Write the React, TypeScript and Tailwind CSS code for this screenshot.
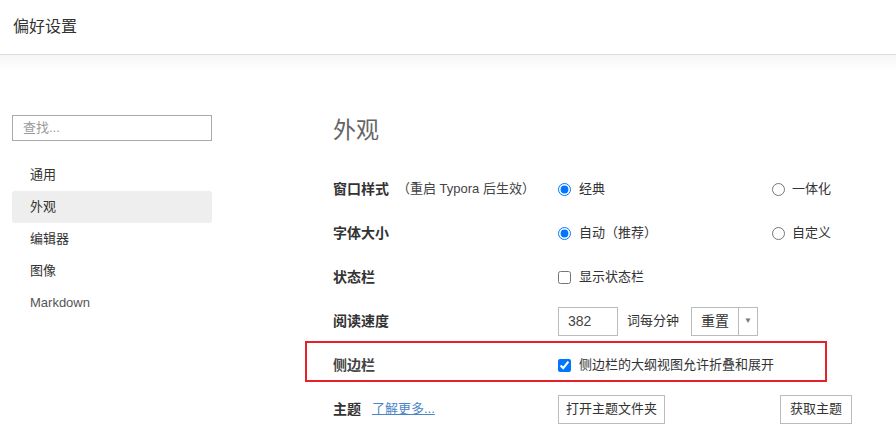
import React from "react";

const font = { fontFamily: '"Liberation Sans", "Noto Sans CJK SC", sans-serif' };

function Radio({ checked }: { checked?: boolean }) {
  return (
    <input
      type="radio"
      checked={!!checked}
      readOnly
      className="m-0 h-[13px] w-[13px] accent-[#0075ff]"
    />
  );
}

function Row({ children, className = "" }: { children: React.ReactNode; className?: string }) {
  return <div className={"relative flex h-[44px] items-center " + className}>{children}</div>;
}

export default function App() {
  return (
    <div className="min-h-[432px] w-[896px] overflow-hidden bg-white text-[#333]" style={font}>
      <div className="flex h-[55px] items-center border-b border-[#dcdcdc] bg-white pl-[13px]">
        <span className="text-[16px] text-[#333]">偏好设置</span>
      </div>
      <div className="h-[16px] bg-gradient-to-b from-[#f6f6f6] to-white" />
      <div className="flex">
        <div className="ml-[12px] mt-[44px] w-[200px]">
          <div className="flex h-[26px] items-center border border-[#a9a9a9] pl-[10px] text-[13px] text-[#999]">
            查找...
          </div>
          <div className="mt-[18px] flex flex-col text-[13px]">
            <div className="flex h-[32px] items-center pl-[18px] text-[#333]">通用</div>
            <div className="flex h-[32px] items-center rounded-[3px] bg-[#eeeeee] pl-[18px] text-[#333]">外观</div>
            <div className="flex h-[32px] items-center pl-[18px] text-[#333]">编辑器</div>
            <div className="flex h-[32px] items-center pl-[18px] text-[#333]">图像</div>
            <div className="flex h-[32px] items-center pl-[18px] text-[#555]">Markdown</div>
          </div>
        </div>
        <div className="ml-[121px] flex-1">
          <div className="mt-[44px] h-[52px] text-[23px] leading-[30px] text-[#666]">外观</div>
          <div className="flex flex-col text-[13px]">
            <Row>
              <div className="flex w-[225px] items-center">
                <span className="text-[14px] font-bold text-[#333]">窗口样式</span>
                <span className="ml-[8px] text-[13px] text-[#444]">（重启 Typora 后生效）</span>
              </div>
              <div className="flex w-[214px] items-center gap-[8px]">
                <Radio checked />
                <span>经典</span>
              </div>
              <div className="flex items-center gap-[7px]">
                <Radio />
                <span>一体化</span>
              </div>
            </Row>
            <Row>
              <div className="w-[225px] text-[14px] font-bold">字体大小</div>
              <div className="flex w-[214px] items-center gap-[8px]">
                <Radio checked />
                <span>自动（推荐）</span>
              </div>
              <div className="flex items-center gap-[7px]">
                <Radio />
                <span>自定义</span>
              </div>
            </Row>
            <Row>
              <div className="w-[225px] text-[14px] font-bold">状态栏</div>
              <div className="flex items-center gap-[8px]">
                <input type="checkbox" readOnly checked={false} className="m-0 h-[13px] w-[13px]" />
                <span>显示状态栏</span>
              </div>
            </Row>
            <Row>
              <div className="w-[225px] text-[14px] font-bold">阅读速度</div>
              <div className="flex h-[29px] w-[60px] items-center border border-[#bbb] pl-[9px] text-[14px] text-[#444]">382</div>
              <span className="ml-[9px]">词每分钟</span>
              <div className="ml-[12px] flex h-[29px] items-stretch border border-[#bbb]">
                <div className="flex w-[47px] items-center justify-center border-r border-[#bbb] text-[14px]">重置</div>
                <div className="flex w-[18px] items-center justify-center text-[8px] text-[#777]">▼</div>
              </div>
            </Row>
            <Row>
              <div className="pointer-events-none absolute left-[-28px] top-[-2px] h-[41px] w-[522px] border-2 border-[#e8202a]" />
              <div className="w-[225px] text-[14px] font-bold text-[#444]">侧边栏</div>
              <div className="flex items-center gap-[8px]">
                <input type="checkbox" readOnly checked className="m-0 h-[13px] w-[13px] accent-[#0075ff]" />
                <span>侧边栏的大纲视图允许折叠和展开</span>
              </div>
            </Row>
            <Row>
              <div className="flex w-[225px] items-center">
                <span className="text-[14px] font-bold">主题</span>
                <span className="ml-[11px] text-[13px] text-[#4a86c5] underline">了解更多...</span>
              </div>
              <div className="flex w-[222px] items-center">
                <div className="flex h-[29px] w-[107px] items-center justify-center border border-[#bbb]">打开主题文件夹</div>
              </div>
              <div className="flex h-[29px] w-[72px] items-center justify-center border border-[#bbb]">获取主题</div>
            </Row>
          </div>
        </div>
      </div>
    </div>
  );
}
